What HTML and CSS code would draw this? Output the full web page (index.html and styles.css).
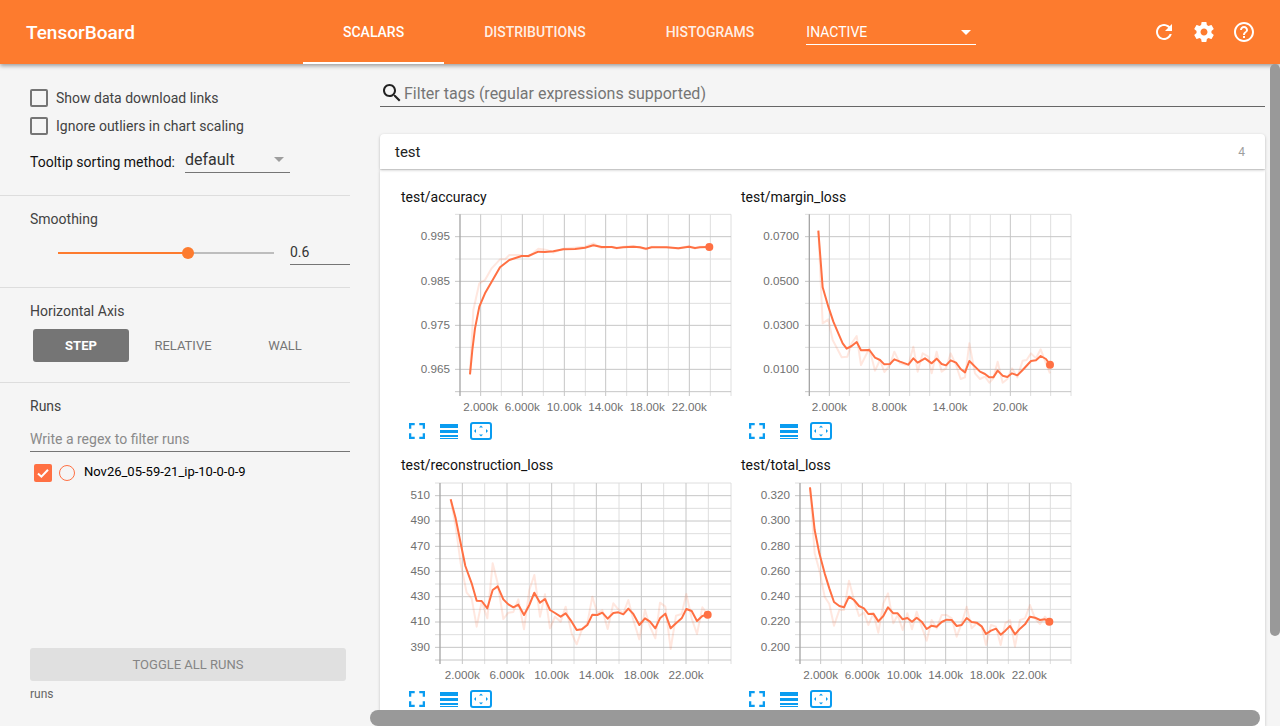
FILE: index.html
```html
<!DOCTYPE html>
<html lang="en">
<head>
<meta charset="utf-8">
<title>TensorBoard</title>
<link rel="stylesheet" href="styles.css">
</head>
<body>
<header class="topbar">
  <div class="brand">TensorBoard</div>
  <nav class="tabs">
    <a class="tab active">SCALARS</a>
    <a class="tab">DISTRIBUTIONS</a>
    <a class="tab">HISTOGRAMS</a>
  </nav>
  <div class="inactive"><span>INACTIVE</span><i class="caret white"></i></div>
  <div class="top-icons">
    <svg viewBox="0 0 24 24"><path d="M17.65 6.35C16.2 4.9 14.21 4 12 4c-4.42 0-7.99 3.58-7.99 8s3.57 8 7.99 8c3.73 0 6.84-2.55 7.73-6h-2.08c-.82 2.33-3.04 4-5.65 4-3.31 0-6-2.69-6-6s2.69-6 6-6c1.66 0 3.14.69 4.22 1.78L13 11h7V4l-2.35 2.35z"/></svg>
    <svg viewBox="0 0 24 24"><path d="M19.43 12.98c.04-.32.07-.64.07-.98s-.03-.66-.07-.98l2.11-1.65c.19-.15.24-.42.12-.64l-2-3.46c-.12-.22-.39-.3-.61-.22l-2.49 1c-.52-.4-1.08-.73-1.69-.98l-.38-2.65C14.46 2.18 14.25 2 14 2h-4c-.25 0-.46.18-.49.42l-.38 2.65c-.61.25-1.17.59-1.69.98l-2.49-1c-.23-.09-.49 0-.61.22l-2 3.46c-.13.22-.07.49.12.64l2.11 1.65c-.04.32-.07.65-.07.98s.03.66.07.98l-2.11 1.65c-.19.15-.24.42-.12.64l2 3.46c.12.22.39.3.61.22l2.49-1c.52.4 1.08.73 1.69.98l.38 2.65c.03.24.24.42.49.42h4c.25 0 .46-.18.49-.42l.38-2.65c.61-.25 1.17-.59 1.69-.98l2.49 1c.23.09.49 0 .61-.22l2-3.46c.12-.22.07-.49-.12-.64l-2.11-1.65zM12 15.5c-1.93 0-3.5-1.57-3.5-3.5s1.57-3.5 3.5-3.5 3.5 1.57 3.5 3.5-1.57 3.5-3.5 3.5z"/></svg>
    <svg viewBox="0 0 24 24"><path d="M11 18h2v-2h-2v2zm1-16C6.48 2 2 6.48 2 12s4.48 10 10 10 10-4.48 10-10S17.52 2 12 2zm0 18c-4.41 0-8-3.59-8-8s3.59-8 8-8 8 3.59 8 8-3.59 8-8 8zm0-14c-2.21 0-4 1.79-4 4h2c0-1.1.9-2 2-2s2 .9 2 2c0 2-3 1.75-3 5h2c0-2.25 3-2.5 3-5 0-2.21-1.79-4-4-4z"/></svg>
  </div>
</header>

<div class="layout">
  <aside class="sidebar">
    <section class="sec sec-options">
      <label class="check-row"><i class="box"></i>Show data download links</label>
      <label class="check-row second"><i class="box"></i>Ignore outliers in chart scaling</label>
      <div class="tooltip-row">
        <span class="tooltip-label">Tooltip sorting method:</span>
        <div class="select"><span>default</span><i class="caret grey"></i></div>
      </div>
    </section>
    <section class="sec sec-smooth">
      <div class="sec-title">Smoothing</div>
      <div class="slider-row">
        <div class="track"><div class="fill"></div><div class="thumb"></div></div>
        <div class="value">0.6</div>
      </div>
    </section>
    <section class="sec sec-axis">
      <div class="sec-title">Horizontal Axis</div>
      <div class="axis-buttons">
        <span class="axis-btn on">STEP</span>
        <span class="axis-btn">RELATIVE</span>
        <span class="axis-btn">WALL</span>
      </div>
    </section>
    <section class="sec sec-runs">
      <div class="sec-title">Runs</div>
      <div class="regex">Write a regex to filter runs</div>
      <div class="run">
        <i class="run-check"><svg viewBox="0 0 18 18"><path d="M4 9.5l3.4 3.2L14 5.8"/></svg></i>
        <i class="run-dot"></i>
        <span>Nov26_05-59-21_ip-10-0-0-9</span>
      </div>
      <div class="toggle">TOGGLE ALL RUNS</div>
      <div class="runs-foot">runs</div>
    </section>
  </aside>

  <main class="content">
    <div class="search">
      <svg viewBox="0 0 24 24"><path d="M15.5 14h-.79l-.28-.27C15.41 12.59 16 11.11 16 9.5 16 5.91 13.09 3 9.5 3S3 5.91 3 9.5 5.91 16 9.5 16c1.61 0 3.09-.59 4.23-1.57l.27.28v.79l5 4.99L20.49 19l-4.99-5zm-6 0C7.01 14 5 11.99 5 9.5S7.01 5 9.5 5 14 7.01 14 9.5 11.99 14 9.5 14z"/></svg>
      <span>Filter tags (regular expressions supported)</span>
    </div>
    <div class="card-head"><span class="card-name">test</span><span class="card-count">4</span></div>
    <div class="card-body">

      <article class="chart">
        <h3>test/accuracy</h3>
        <svg class="plot" viewBox="0 90 1026 600">
          <path class="minor" d="M195 103H1023M195 237H1023M195 370H1023M195 502H1023M334 103V648M460 103V648M586 103V648M710 103V648M835 103V648M961 103V648M1023 103V648"/>
          <path class="major" d="M195 170H1023M195 304H1023M195 436H1023M195 568H1023M195 635H1023M272 103V648M397 103V648M523 103V648M647 103V648M772 103V648M898 103V648"/>
          <path class="axis" d="M210 103V648"/>
          <polyline class="raw" points="240,583 250,390 268,310 285,300 305,265 330,238 345,238 358,225 385,225 415,230 445,206 470,210 490,218 520,206 585,200 610,190 635,205 665,200 680,206 700,200 730,198 750,203 768,208 785,200 830,202 865,206 897,198 915,206 930,200 958,201"/>
          <polyline class="smooth" points="240,583 247,510 255,445 268,380 285,340 305,305 330,262 358,240 395,228 415,228 445,215 465,216 490,214 520,208 555,207 585,203 610,196 635,201 665,201 680,204 700,202 730,200 750,202 768,206 785,202 830,202 865,205 897,200 915,204 930,202 958,201"/>
          <circle class="dot" cx="958" cy="201" r="12"/>
          <g class="ylab"><text x="180" y="183">0.995</text><text x="180" y="317">0.985</text><text x="180" y="449">0.975</text><text x="180" y="581">0.965</text></g>
          <g class="xlab"><text x="272" y="693">2.000k</text><text x="397" y="693">6.000k</text><text x="523" y="693">10.00k</text><text x="647" y="693">14.00k</text><text x="772" y="693">18.00k</text><text x="898" y="693">22.00k</text></g>
        </svg>
        <div class="tools">
          <svg class="t-full" viewBox="0 0 14 14"><path d="M1 5V1h4M9 1h4v4M13 9v4H9M5 13H1V9"/></svg>
          <svg class="t-lines" viewBox="0 0 18 15"><rect y="0" width="18" height="4"/><rect y="6" width="18" height="3"/><rect y="11" width="18" height="2"/><rect y="14" width="18" height="1"/></svg>
          <svg class="t-fit" viewBox="0 0 22 18"><rect class="frame" x="1" y="1" width="20" height="16" rx="2"/><path d="M11 3.5l2 2H9zM11 14.5l-2-2h4zM4 9l2-2v4zM18 9l-2 2V7z"/></svg>
        </div>
      </article>

      <article class="chart">
        <h3>test/margin_loss</h3>
        <svg class="plot" viewBox="0 90 1026 600">
          <path class="minor" d="M225 103H1023M225 237H1023M225 370H1023M225 502H1023M358 103V648M418 103V648M539 103V648M599 103V648M720 103V648M781 103V648M902 103V648M962 103V648M1023 103V648"/>
          <path class="major" d="M225 170H1023M225 304H1023M225 436H1023M225 568H1023M225 635H1023M298 103V648M478 103V648M660 103V648M841 103V648"/>
          <path class="axis" d="M238 103V648"/>
          <polyline class="raw" points="265,152 278,430 295,418 308,480 335,532 352,530 365,490 380,468 393,555 418,505 435,572 450,540 463,576 480,555 493,515 510,550 535,556 550,500 563,575 578,520 595,530 605,580 620,515 635,575 648,565 662,520 678,555 692,597 705,592 718,490 735,580 750,597 765,590 778,608 790,595 803,545 818,608 832,597 846,565 862,592 878,542 890,540 903,520 918,535 932,508 948,550 960,580"/>
          <polyline class="smooth" points="265,152 278,322 295,380 310,425 325,460 338,490 350,506 365,498 380,486 393,511 418,510 435,533 450,540 463,553 480,552 493,538 510,545 535,554 550,535 563,548 585,535 605,550 620,536 635,552 648,556 662,541 678,548 692,567 705,577 718,543 735,560 750,575 765,582 778,592 790,592 803,572 818,587 832,591 846,580 862,586 878,570 903,543 918,541 932,528 948,537 960,554"/>
          <circle class="dot" cx="960" cy="554" r="12"/>
          <g class="ylab"><text x="207" y="183">0.0700</text><text x="207" y="317">0.0500</text><text x="207" y="449">0.0300</text><text x="207" y="581">0.0100</text></g>
          <g class="xlab"><text x="298" y="693">2.000k</text><text x="478" y="693">8.000k</text><text x="660" y="693">14.00k</text><text x="841" y="693">20.00k</text></g>
        </svg>
        <div class="tools">
          <svg class="t-full" viewBox="0 0 14 14"><path d="M1 5V1h4M9 1h4v4M13 9v4H9M5 13H1V9"/></svg>
          <svg class="t-lines" viewBox="0 0 18 15"><rect y="0" width="18" height="4"/><rect y="6" width="18" height="3"/><rect y="11" width="18" height="2"/><rect y="14" width="18" height="1"/></svg>
          <svg class="t-fit" viewBox="0 0 22 18"><rect class="frame" x="1" y="1" width="20" height="16" rx="2"/><path d="M11 3.5l2 2H9zM11 14.5l-2-2h4zM4 9l2-2v4zM18 9l-2 2V7z"/></svg>
        </div>
      </article>

      <article class="chart">
        <h3>test/reconstruction_loss</h3>
        <svg class="plot" viewBox="0 84 1026 600">
          <path class="minor" d="M135 99H1023M135 175H1023M135 251H1023M135 326H1023M135 402H1023M135 478H1023M135 554H1023M284 99V642M418 99V642M552 99V642M687 99V642M821 99V642M955 99V642M1023 99V642"/>
          <path class="major" d="M135 137H1023M135 213H1023M135 289H1023M135 364H1023M135 440H1023M135 516H1023M135 592H1023M135 630H1023M217 99V642M351 99V642M485 99V642M619 99V642M754 99V642M888 99V642"/>
          <path class="axis" d="M150 99V642"/>
          <polyline class="raw" points="182,148 197,230 212,340 230,428 245,445 260,530 275,455 292,505 308,340 323,400 340,507 355,488 370,486 385,448 402,538 418,420 433,375 450,500 465,433 480,535 495,500 512,515 527,470 545,550 560,583 575,540 592,520 607,440 622,490 637,480 653,537 670,460 685,478 700,490 715,450 730,510 748,568 765,480 780,530 796,565 810,458 826,470 842,597 858,497 875,492 889,432 905,505 921,552 937,472 953,494"/>
          <polyline class="smooth" points="182,148 197,205 210,270 226,348 245,400 260,452 275,453 292,475 308,420 323,409 340,448 355,463 370,472 385,464 402,495 418,465 433,428 450,458 465,447 480,480 495,489 512,500 527,490 545,515 560,540 575,538 592,525 607,494 622,495 637,488 653,506 670,489 685,487 700,493 715,476 730,492 748,525 765,505 780,515 796,535 810,505 826,491 842,535 858,520 875,505 889,477 905,483 921,513 937,498 953,494"/>
          <circle class="dot" cx="953" cy="494" r="12"/>
          <g class="ylab"><text x="120" y="149">510</text><text x="120" y="225">490</text><text x="120" y="301">470</text><text x="120" y="376">450</text><text x="120" y="452">430</text><text x="120" y="528">410</text><text x="120" y="604">390</text></g>
          <g class="xlab"><text x="217" y="687">2.000k</text><text x="351" y="687">6.000k</text><text x="485" y="687">10.00k</text><text x="619" y="687">14.00k</text><text x="754" y="687">18.00k</text><text x="888" y="687">22.00k</text></g>
        </svg>
        <div class="tools">
          <svg class="t-full" viewBox="0 0 14 14"><path d="M1 5V1h4M9 1h4v4M13 9v4H9M5 13H1V9"/></svg>
          <svg class="t-lines" viewBox="0 0 18 15"><rect y="0" width="18" height="4"/><rect y="6" width="18" height="3"/><rect y="11" width="18" height="2"/><rect y="14" width="18" height="1"/></svg>
          <svg class="t-fit" viewBox="0 0 22 18"><rect class="frame" x="1" y="1" width="20" height="16" rx="2"/><path d="M11 3.5l2 2H9zM11 14.5l-2-2h4zM4 9l2-2v4zM18 9l-2 2V7z"/></svg>
        </div>
      </article>

      <article class="chart">
        <h3>test/total_loss</h3>
        <svg class="plot" viewBox="0 84 1026 600">
          <path class="minor" d="M195 99H1023M195 175H1023M195 251H1023M195 326H1023M195 402H1023M195 478H1023M195 554H1023M334 99V642M460 99V642M586 99V642M710 99V642M835 99V642M961 99V642M1023 99V642"/>
          <path class="major" d="M195 137H1023M195 213H1023M195 289H1023M195 364H1023M195 440H1023M195 516H1023M195 592H1023M195 630H1023M272 99V642M397 99V642M523 99V642M647 99V642M772 99V642M898 99V642"/>
          <path class="axis" d="M210 99V642"/>
          <polyline class="raw" points="240,112 254,310 268,360 284,440 298,462 312,527 328,480 342,480 357,392 372,450 387,498 402,488 415,525 430,490 445,548 460,460 474,430 490,520 503,495 518,540 532,490 546,538 560,485 575,530 590,572 605,510 620,535 635,495 650,495 665,505 680,560 695,520 710,470 725,535 740,520 755,530 768,585 783,525 798,530 812,585 826,520 840,510 855,590 870,510 885,505 900,465 915,505 930,522 945,500 958,515"/>
          <polyline class="smooth" points="240,112 254,240 268,310 284,370 298,415 312,456 328,468 342,472 357,440 372,450 387,468 402,475 415,492 430,491 445,514 460,498 474,472 490,490 503,490 518,508 532,504 546,515 560,503 575,515 590,537 605,527 620,530 635,516 650,509 665,510 680,528 695,525 710,504 725,516 740,518 755,529 768,552 783,542 798,536 812,554 826,542 840,528 855,553 870,536 885,523 900,500 915,503 930,510 945,508 958,515"/>
          <circle class="dot" cx="958" cy="515" r="12"/>
          <g class="ylab"><text x="180" y="149">0.320</text><text x="180" y="225">0.300</text><text x="180" y="301">0.280</text><text x="180" y="376">0.260</text><text x="180" y="452">0.240</text><text x="180" y="528">0.220</text><text x="180" y="604">0.200</text></g>
          <g class="xlab"><text x="272" y="687">2.000k</text><text x="397" y="687">6.000k</text><text x="523" y="687">10.00k</text><text x="647" y="687">14.00k</text><text x="772" y="687">18.00k</text><text x="898" y="687">22.00k</text></g>
        </svg>
        <div class="tools">
          <svg class="t-full" viewBox="0 0 14 14"><path d="M1 5V1h4M9 1h4v4M13 9v4H9M5 13H1V9"/></svg>
          <svg class="t-lines" viewBox="0 0 18 15"><rect y="0" width="18" height="4"/><rect y="6" width="18" height="3"/><rect y="11" width="18" height="2"/><rect y="14" width="18" height="1"/></svg>
          <svg class="t-fit" viewBox="0 0 22 18"><rect class="frame" x="1" y="1" width="20" height="16" rx="2"/><path d="M11 3.5l2 2H9zM11 14.5l-2-2h4zM4 9l2-2v4zM18 9l-2 2V7z"/></svg>
        </div>
      </article>

    </div>
  </main>
</div>
<div class="scroll-v"></div>
<div class="scroll-h"></div>
</body>
</html>
```

FILE: styles.css
```css
* { box-sizing: border-box; }
html, body { margin: 0; height: 726px; overflow: hidden; }
body { font-family: Roboto, "Liberation Sans", sans-serif; background: #f5f5f5; color: #212121; position: relative; }

.topbar { height: 64px; background: #fd7b2e; color: #fff; display: flex; align-items: center; box-shadow: 0 2px 4px rgba(0,0,0,.35); position: relative; z-index: 2; }
.brand { width: 303px; padding-left: 26px; font-size: 19px; font-weight: 500; }
.tabs { display: flex; height: 64px; }
.tab { padding: 0 40px; line-height: 64px; font-size: 14px; font-weight: 500; color: rgba(255,255,255,.9); }
.tab.active { color: #fff; border-bottom: 2px solid #fff; }
.inactive { width: 170px; height: 25px; margin-left: 12px; margin-top: 1px; border-bottom: 1px solid #fff; display: flex; align-items: center; justify-content: space-between; font-size: 14px; padding-right: 5px; }
.caret { display: block; width: 0; height: 0; border-left: 5.5px solid transparent; border-right: 5.5px solid transparent; border-top: 5px solid; }
.caret.white { border-top-color: #fff; }
.caret.grey { border-top-color: #9e9e9e; }
.top-icons { margin-left: auto; padding-right: 24px; display: flex; gap: 16px; }
.top-icons svg { width: 24px; height: 24px; fill: #fff; display: block; }

.layout { display: flex; height: 662px; }
.sidebar { width: 350px; flex: none; display: flex; flex-direction: column; }
.sec { padding-left: 30px; border-bottom: 1px solid #ddd; }
.sec-title { font-size: 14px; line-height: 18px; color: #424242; }

.sec-options { height: 132px; padding-top: 25px; }
.check-row { display: flex; align-items: center; height: 18px; font-size: 14px; color: #424242; }
.check-row.second { margin-top: 10px; }
.box { width: 18px; height: 18px; border: 2px solid #757575; border-radius: 2px; margin-right: 8px; }
.tooltip-row { display: flex; align-items: center; margin-top: 13px; height: 25px; }
.tooltip-label { font-size: 14px; color: #111; width: 155px; padding-top: 2px; }
.select { width: 105px; height: 25px; border-bottom: 1px solid #757575; display: flex; align-items: center; justify-content: space-between; font-size: 16px; color: #333; padding: 0 6px 2px 0; }

.sec-smooth { height: 92px; padding-top: 14px; }
.slider-row { display: flex; align-items: center; margin-top: 12px; height: 25px; }
.track { width: 216px; height: 2px; margin-left: 28px; background: #bdbdbd; position: relative; }
.fill { width: 130px; height: 2px; background: #fd7b2e; }
.thumb { position: absolute; left: 124px; top: -5px; width: 12px; height: 12px; border-radius: 50%; background: #fd7b2e; }
.value { width: 60px; height: 25px; margin-left: 16px; border-bottom: 1px solid #757575; font-size: 14px; line-height: 25px; color: #333; }

.sec-axis { height: 95px; padding-top: 14px; }
.axis-buttons { display: flex; gap: 6px; margin: 9px 0 0 3px; }
.axis-btn { width: 96px; height: 33px; line-height: 33px; text-align: center; font-size: 13px; font-weight: 400; color: #757575; border-radius: 3px; }
.axis-btn.on { background: #757575; color: #fff; font-weight: 700; }

.sec-runs { flex: 1; border-bottom: 0; padding-top: 14px; display: flex; flex-direction: column; }
.regex { height: 25px; margin-top: 12px; border-bottom: 1px solid #757575; font-size: 14px; line-height: 24px; color: #8a8a8a; }
.run { display: flex; align-items: center; margin: 12px 0 0 4px; height: 18px; font-size: 13px; color: #000; }
.run-check { width: 18px; height: 18px; border-radius: 2px; background: #ff7043; display: block; }
.run-check svg { display: block; width: 18px; height: 18px; fill: none; stroke: #fff; stroke-width: 2; }
.run-dot { width: 16px; height: 16px; margin-left: 7px; border: 1.5px solid #ff7043; border-radius: 50%; display: block; }
.run span { margin-left: 9px; margin-top: -3px; }
.toggle { margin-top: auto; width: 316px; height: 33px; line-height: 33px; text-align: center; background: #e0e0e0; border-radius: 3px; font-size: 13px; font-weight: 400; color: #858585; }
.runs-foot { margin: 6px 0 25px; font-size: 12px; line-height: 14px; color: #666; }

.content { flex: 1; min-width: 0; padding: 17px 15px 0 30px; display: flex; flex-direction: column; }
.search { height: 26px; border-bottom: 1px solid #666; display: flex; align-items: center; flex: none; font-size: 16px; color: #757575; }
.search svg { width: 24px; height: 24px; fill: #222; flex: none; margin-top: -2px; }
.search span { margin-top: -1px; }
.card-head { margin-top: 27px; height: 35px; flex: none; display: flex; justify-content: space-between; align-items: center; background: #fff; border-radius: 4px 4px 0 0; padding: 0 20px 0 15px; box-shadow: 0 1px 3px rgba(0,0,0,.25); position: relative; z-index: 1; }
.card-name { font-size: 15px; color: #222; }
.card-count { font-size: 12px; color: #9e9e9e; }
.card-body { flex: 1; margin-top: 1px; background: #fff; padding: 18px 0 0 10px; display: grid; grid-template-columns: 340px 340px; grid-auto-rows: 268px; box-shadow: 0 1px 3px rgba(0,0,0,.2); overflow: hidden; }

.chart h3 { margin: 0; padding-left: 11px; height: 22px; font-size: 14px; font-weight: 400; line-height: 18px; color: #111; }
.plot { display: block; width: 342px; height: 200px; overflow: visible; }
.plot path, .plot polyline { fill: none; }
.minor { stroke: #dedede; stroke-width: 3; }
.major { stroke: #c6c6c6; stroke-width: 3; }
.axis { stroke: #a6a6a6; stroke-width: 4; }
.raw { stroke: #ff7043; stroke-opacity: .17; stroke-width: 6; stroke-linejoin: round; }
.smooth { stroke: #ff7043; stroke-width: 6; stroke-linejoin: round; }
.dot { fill: #ff7043; }
.ylab, .xlab { font-family: "Liberation Sans", Arial, sans-serif; font-size: 35px; fill: #707070; }
.ylab { text-anchor: end; transform: translateY(-2px); }
.xlab { text-anchor: middle; }

.tools { display: flex; align-items: center; height: 18px; margin-top: 12px; padding-left: 19px; }
.tools svg { display: block; flex: none; }
.t-full { width: 16px; height: 16px; fill: none; }
.tools .t-full path { fill: none; stroke: #0a9cf0; stroke-width: 2; }
.t-lines { width: 18px; height: 15px; margin-left: 15px; fill: #0a9cf0; }
.t-fit { width: 22px; height: 18px; margin-left: 12px; fill: #0a9cf0; }
.tools .frame { fill: none; stroke: #0a9cf0; stroke-width: 2; }

.scroll-v { position: absolute; left: 1270px; top: 64px; width: 10px; height: 572px; background: #999; border-radius: 5px; z-index: 3; }
.scroll-h { position: absolute; left: 370px; top: 710px; width: 890px; height: 16px; background: #999; border-radius: 8px; z-index: 3; }
```
